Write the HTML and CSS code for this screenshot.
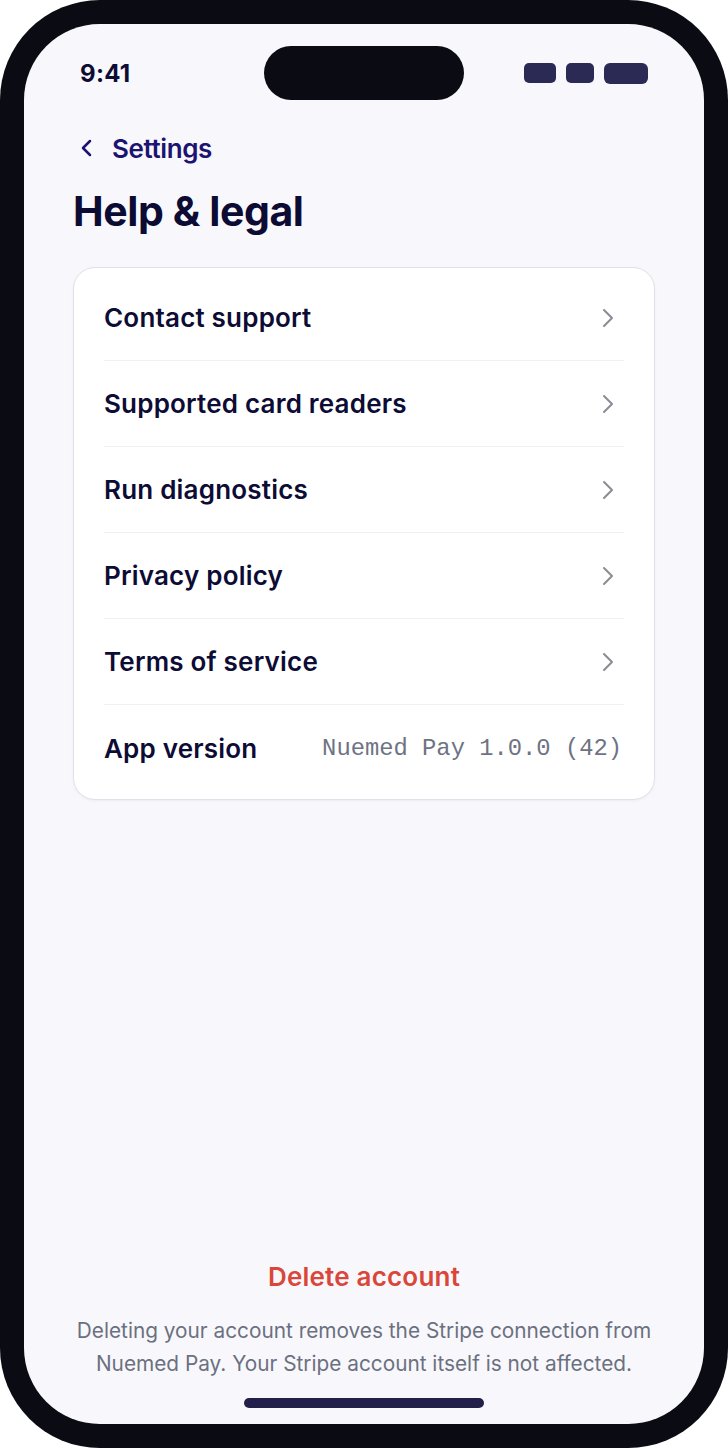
FILE: index.html
```html
<!DOCTYPE html>
<html lang="en">
<head>
  <meta charset="UTF-8" />
  <meta name="viewport" content="width=device-width, initial-scale=1" />
  <title>Help &amp; legal</title>
  <link rel="stylesheet" href="styles.css">
</head>
<body>
  <div class="phone">
    <div class="screen">
      <div class="status-bar">
        <span class="time">9:41</span>
        <div class="island"></div>
        <div class="indicators">
          <span class="ind ind-signal"></span>
          <span class="ind ind-wifi"></span>
          <span class="ind ind-battery"></span>
        </div>
      </div>

      <div class="content">
        <a class="back-link" href="#">
          <svg class="back-icon" width="20" height="22" viewBox="0 0 20 22" fill="none">
            <path d="M13 4L6 11l7 7" stroke="currentColor" stroke-width="2.5" stroke-linecap="round" stroke-linejoin="round"/>
          </svg>
          <span>Settings</span>
        </a>
        <h1 class="page-title">Help &amp; legal</h1>

        <div class="card">
          <a class="row" href="#">
            <span class="row-label">Contact support</span>
            <svg class="chevron" width="16" height="22" viewBox="0 0 16 22" fill="none"><path d="M4 3l8 8-8 8" stroke="currentColor" stroke-width="2" stroke-linecap="round" stroke-linejoin="round"/></svg>
          </a>
          <a class="row" href="#">
            <span class="row-label">Supported card readers</span>
            <svg class="chevron" width="16" height="22" viewBox="0 0 16 22" fill="none"><path d="M4 3l8 8-8 8" stroke="currentColor" stroke-width="2" stroke-linecap="round" stroke-linejoin="round"/></svg>
          </a>
          <a class="row" href="#">
            <span class="row-label">Run diagnostics</span>
            <svg class="chevron" width="16" height="22" viewBox="0 0 16 22" fill="none"><path d="M4 3l8 8-8 8" stroke="currentColor" stroke-width="2" stroke-linecap="round" stroke-linejoin="round"/></svg>
          </a>
          <a class="row" href="#">
            <span class="row-label">Privacy policy</span>
            <svg class="chevron" width="16" height="22" viewBox="0 0 16 22" fill="none"><path d="M4 3l8 8-8 8" stroke="currentColor" stroke-width="2" stroke-linecap="round" stroke-linejoin="round"/></svg>
          </a>
          <a class="row" href="#">
            <span class="row-label">Terms of service</span>
            <svg class="chevron" width="16" height="22" viewBox="0 0 16 22" fill="none"><path d="M4 3l8 8-8 8" stroke="currentColor" stroke-width="2" stroke-linecap="round" stroke-linejoin="round"/></svg>
          </a>
          <div class="row">
            <span class="row-label">App version</span>
            <span class="row-value">Nuemed Pay 1.0.0 (42)</span>
          </div>
        </div>
      </div>

      <div class="danger-zone">
        <a class="delete-btn" href="#">Delete account</a>
        <p class="delete-note">Deleting your account removes the Stripe connection from Nuemed Pay. Your Stripe account itself is not affected.</p>
      </div>
      <div class="home-indicator"></div>
    </div>
  </div>
</body>
</html>
```

FILE: styles.css
```css
* {
  margin: 0;
  padding: 0;
  box-sizing: border-box;
}
html, body {
  width: 728px;
  height: 1448px;
  background: #ffffff;
  font-family: 'Inter', 'Lato', sans-serif;
  color: #0d0c35;
}
a {
  color: inherit;
  text-decoration: none;
}
.phone {
  width: 728px;
  height: 1448px;
  padding: 24px;
  background: #0b0b14;
  border-radius: 100px;
}
.screen {
  height: 100%;
  background: #f8f8fc;
  border-radius: 76px;
  overflow: hidden;
  display: flex;
  flex-direction: column;
}
.status-bar {
  display: grid;
  grid-template-columns: 1fr auto 1fr;
  align-items: center;
  padding: 22px 56px 0;
  height: 76px;
}
.time {
  font-size: 24px;
  font-weight: 700;
  letter-spacing: 0.3px;
  color: #0d0c35;
}
.island {
  width: 200px;
  height: 54px;
  border-radius: 27px;
  background: #0b0b14;
}
.indicators {
  display: flex;
  justify-content: flex-end;
  align-items: center;
  gap: 10px;
}
.ind {
  display: block;
  height: 20px;
  border-radius: 5px;
  background: #2b2a55;
}
.ind-signal { width: 32px; }
.ind-wifi { width: 28px; }
.ind-battery { width: 44px; height: 21px; border-radius: 6px; }

.content {
  padding: 0 49px;
  flex: 1;
}
.back-link {
  display: flex;
  align-items: center;
  gap: 15px;
  margin-top: 33px;
  height: 30px;
  color: #1c1470;
  font-size: 26px;
  font-weight: 600;
  letter-spacing: -0.4px;
}
.back-icon {
  margin-left: 4px;
}
.page-title {
  margin-top: 18px;
  font-size: 41px;
  line-height: 60px;
  font-weight: 700;
  letter-spacing: -0.4px;
  color: #0c0b33;
}
.card {
  margin-top: 26px;
  background: #ffffff;
  border: 1px solid #e1e1ea;
  border-radius: 22px;
  padding: 7px 30px 8px;
  box-shadow: 0 1px 3px rgba(20, 20, 60, 0.05);
}
.row {
  display: flex;
  align-items: center;
  justify-content: space-between;
  height: 86px;
  border-bottom: 1px solid #efeff4;
}
.row:last-child {
  border-bottom: none;
}
.row-label {
  font-size: 26px;
  font-weight: 600;
  letter-spacing: 0.2px;
  color: #0d0c35;
}
.chevron {
  color: #8b8b95;
  margin-right: 8px;
}
.row-value {
  font-family: 'Liberation Mono', 'DejaVu Sans Mono', monospace;
  font-size: 23.8px;
  color: #6e7383;
  margin-right: 2px;
}

.danger-zone {
  display: flex;
  flex-direction: column;
  align-items: center;
  padding: 0 40px;
  text-align: center;
}
.delete-btn {
  font-size: 26px;
  font-weight: 600;
  letter-spacing: 0.2px;
  color: #d8473a;
}
.delete-note {
  margin-top: 22px;
  font-size: 20.8px;
  line-height: 33px;
  color: #6b7080;
}
.home-indicator {
  width: 240px;
  height: 10px;
  border-radius: 5px;
  background: #22204a;
  margin: 18px auto 16px;
}
```
